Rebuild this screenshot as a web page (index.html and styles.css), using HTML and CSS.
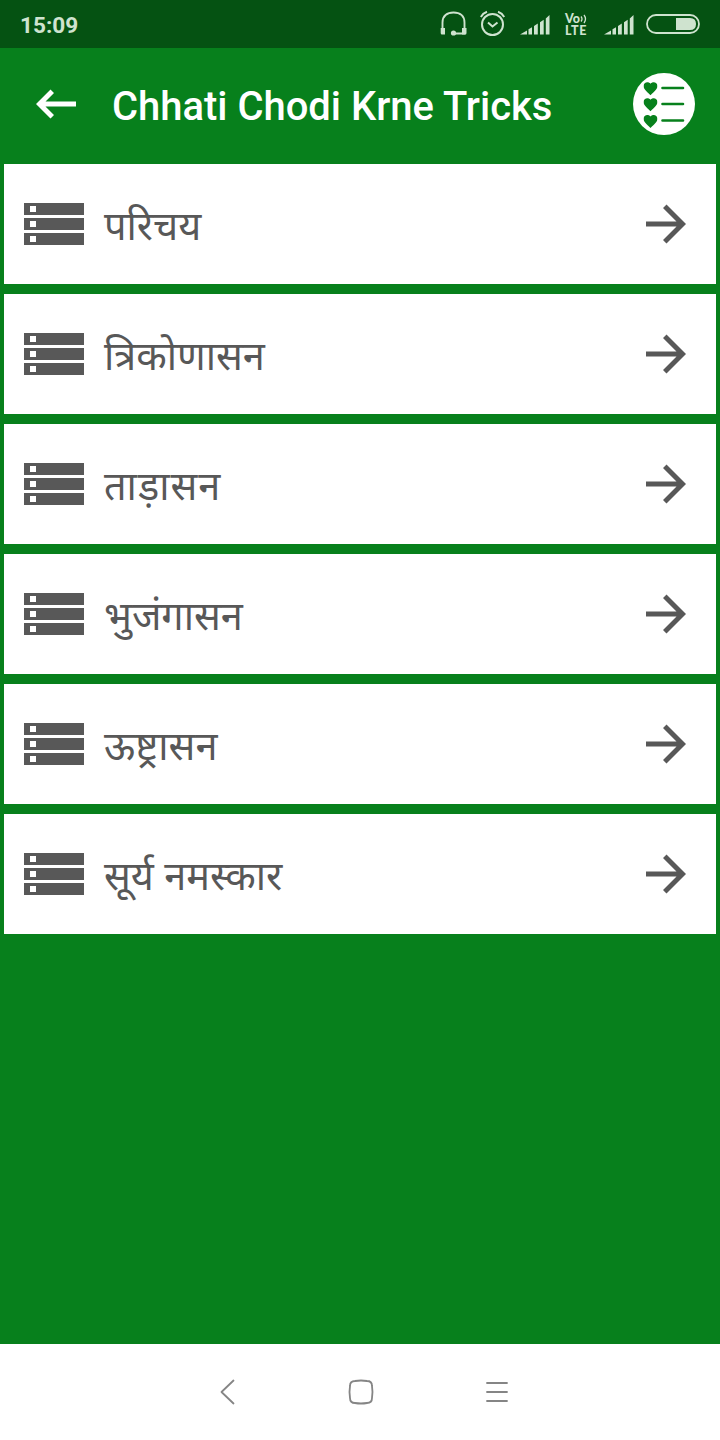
FILE: index.html
```html
<!DOCTYPE html>
<html lang="hi">
<head>
<meta charset="utf-8">
<title>Chhati Chodi Krne Tricks</title>
<link rel="stylesheet" href="styles.css">
</head>
<body>
<svg class="defs" width="0" height="0" aria-hidden="true">
  <symbol id="storage" viewBox="0 0 60 42"><path fill-rule="evenodd" d="M0 0H60V12H0ZM6 3V9H12V3ZM0 15H60V27H0ZM6 18V24H12V18ZM0 30H60V42H0ZM6 33V39H12V33Z"/></symbol>
  <symbol id="forward" viewBox="0 0 40 40"><path d="M0 17.500H30.500L17 4 20.500 .5 40 20 20.500 39.500 17 36 30.500 22.500H0Z"/></symbol>
  <symbol id="signal" viewBox="0 0 30 22"><path d="M0 20.500 7 16.400V20.500ZM8.500 15.300 12 13.200V20.500H8.500ZM14 12 17.800 9.600V20.500H14ZM20 8.200 23.700 5.800V20.500H20ZM25.800 4.500 29.500 1V20.500H25.800Z"/></symbol>
  <symbol id="heart" viewBox="0 0 14 14"><path d="M7 13.500C5.500 11.500 0 8 0 4.200C0 .3 5-.8 7 2C9-.8 14 .3 14 4.200C14 8 8.500 11.500 7 13.500Z"/></symbol>
</svg>
<div class="screen">
  <header class="status">
    <span class="clock">15:09</span>
    <svg class="headset" width="28" height="26" viewBox="0 0 28 26"><path d="M2.500 20V11.500C2.500 5 7 1.500 13.500 1.500S24.500 5 24.500 11.500V22.500H13.500" fill="none" stroke="#cfe3cf" stroke-width="1.900"/><path d="M.7 17H5V23.500H2Q.7 23.500.7 22ZM22 17H26.500V22Q26.500 23.500 25.200 23.500H22Z"/><circle cx="13.500" cy="22" r="2.600"/></svg>
    <svg class="alarm" width="27" height="28" viewBox="0 0 27 28"><g fill="none" stroke="#cfe3cf" stroke-width="2"><circle cx="12.500" cy="15.500" r="10.500"/><path d="M8 13.500 12.500 17.500 17.500 13.500M.8 8Q3 4.200 7 2.800M24.200 8Q22 4.200 18 2.800"/></g></svg>
    <svg class="bars" width="30" height="22"><use href="#signal"/></svg>
    <span class="volte"><span class="vo">Vo<svg width="7" height="10" viewBox="0 0 7 10"><path d="M1 2.500Q3 5 1 7.500M4 1Q7 5 4 9" fill="none" stroke="#cfe3cf" stroke-width="1.300"/></svg></span><span class="lte">LTE</span></span>
    <svg class="bars" width="30" height="22"><use href="#signal"/></svg>
    <svg class="battery" width="54" height="20" viewBox="0 0 54 20"><rect x="1" y="1" width="52" height="18" rx="9" fill="none" stroke="#cfe3cf" stroke-width="1.800"/><path d="M30 4H44Q50 4 50 10T44 16H30Z"/></svg>
  </header>
  <nav class="toolbar">
    <svg class="back" width="40" height="30" viewBox="0 0 40 30"><path d="M0 15 14.500 .5 18 4 9.500 12.500H40V17.500H9.500L18 26 14.500 29.500Z"/></svg>
    <h1 class="title">Chhati Chodi Krne Tricks</h1>
    <svg class="favorites" width="62" height="62" viewBox="0 0 62 62"><circle class="disc" cx="31" cy="31" r="31"/><use href="#heart" x="10.500" y="8.700" width="14" height="14"/><use href="#heart" x="10.500" y="24.700" width="14" height="14"/><use href="#heart" x="10.500" y="41.500" width="14" height="14"/><path d="M29.500 15H50M29.500 31H50M29.500 47.500H50" stroke="#07801c" stroke-width="2.600" stroke-linecap="round"/></svg>
  </nav>
  <main class="list">
    <div class="row"><svg width="60" height="42"><use href="#storage"/></svg><span class="label">परिचय</span><svg width="40" height="40"><use href="#forward"/></svg></div>
    <div class="row"><svg width="60" height="42"><use href="#storage"/></svg><span class="label">त्रिकोणासन</span><svg width="40" height="40"><use href="#forward"/></svg></div>
    <div class="row"><svg width="60" height="42"><use href="#storage"/></svg><span class="label wide">ताड़ासन</span><svg width="40" height="40"><use href="#forward"/></svg></div>
    <div class="row"><svg width="60" height="42"><use href="#storage"/></svg><span class="label">भुजंगासन</span><svg width="40" height="40"><use href="#forward"/></svg></div>
    <div class="row"><svg width="60" height="42"><use href="#storage"/></svg><span class="label">ऊष्ट्रासन</span><svg width="40" height="40"><use href="#forward"/></svg></div>
    <div class="row"><svg width="60" height="42"><use href="#storage"/></svg><span class="label">सूर्य नमस्कार</span><svg width="40" height="40"><use href="#forward"/></svg></div>
  </main>
  <footer class="system-nav">
    <svg width="16" height="26" viewBox="0 0 16 26"><path d="M14.500 1.500 2.500 13 14.500 24.500"/></svg>
    <svg width="26" height="26" viewBox="0 0 26 26"><path d="M7 2Q13 1 19 2Q24 2 24 7Q25 13 24 19Q24 24 19 24Q13 25 7 24Q2 24 2 19Q1 13 2 7Q2 2 7 2Z"/></svg>
    <svg width="24" height="26" viewBox="0 0 24 26"><path d="M1 4H21M1 13H21M1 22H21"/></svg>
  </footer>
</div>
</body>
</html>
```

FILE: styles.css
```css
* { box-sizing: border-box; }
body { margin: 0; background: #07801c; font-family: Roboto, "Noto Sans", sans-serif; }
svg { display: block; flex: none; }
.defs { display: none; }
.screen { width: 720px; height: 1440px; display: flex; flex-direction: column; }
.status { height: 48px; padding: 0 20px; display: flex; align-items: center; background: #055212; color: #cfe3cf; fill: #cfe3cf; }
.clock { flex: 1; font-size: 22.6px; font-weight: 700; line-height: 28px; padding-top: 3px; }
.headset { margin-right: 12px; }
.alarm { margin: 0 13px 3px 0; }
.bars { margin-top: 2px; }
.volte { width: 24px; margin: 2px 15px 0; display: flex; flex-direction: column; gap: 1px; font: 900 12.5px/11px Lato, sans-serif; }
.vo { height: 10px; line-height: 10px; display: flex; align-items: center; }
.lte { height: 11px; line-height: 11px; letter-spacing: 0.6px; }
.battery { margin-left: 12px; }
.toolbar { height: 116px; padding: 0 25px 4px 36px; display: flex; align-items: center; fill: #fff; }
.title { flex: 1; margin: 0 0 0 36px; padding-top: 6px; color: #fff; font-size: 39.95px; font-weight: 500; line-height: 48px; white-space: nowrap; }
.favorites { fill: #07801c; }
.favorites .disc { fill: #fff; }
.list { flex: 1; padding: 0 4px; display: flex; flex-direction: column; gap: 10px; }
.row { height: 120px; padding: 0 30px 0 20px; display: flex; align-items: center; background: #fff; fill: #585858; }
.label { flex: 1; margin-left: 20px; padding-top: 2px; color: #585858; font: 400 39.7px/54px "Noto Sans", "Noto Sans Devanagari", sans-serif; white-space: nowrap; }
.label.wide { letter-spacing: 1px; }
.system-nav { height: 96px; padding: 0 210px 0 219px; display: flex; align-items: center; justify-content: space-between; background: #fff; fill: none; stroke: #858585; stroke-width: 1.8; stroke-linecap: round; stroke-linejoin: round; }
```
